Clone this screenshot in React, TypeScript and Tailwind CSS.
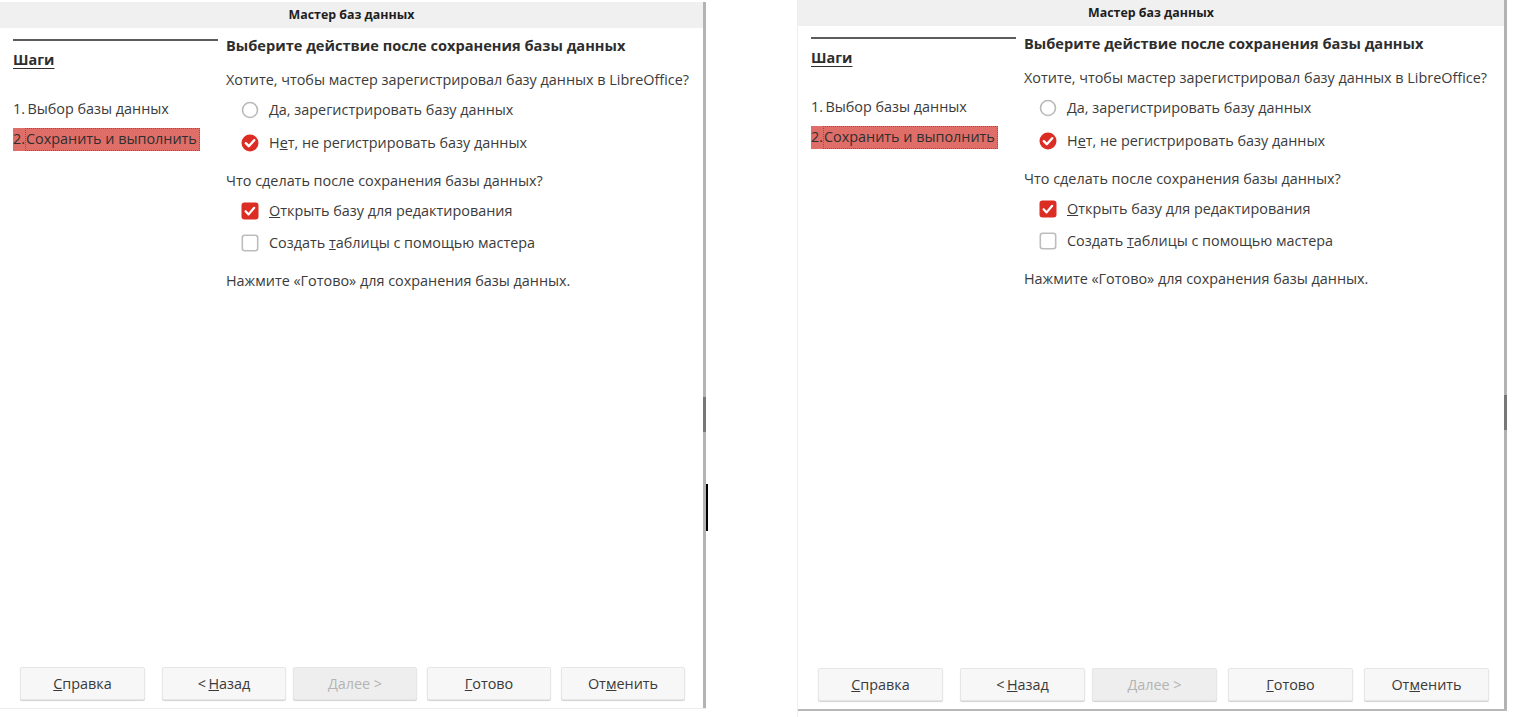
import React from "react";

const font = { fontFamily: '"Open Sans", "Noto Sans", sans-serif' };

function Radio({ checked }: { checked?: boolean }) {
  if (checked) {
    return (
      <svg width="18" height="18" viewBox="0 0 18 18">
        <circle cx="9" cy="9" r="8.5" fill="#dc2d24" />
        <path d="M4.8 9.2 L7.8 12.2 L13.2 6.2" fill="none" stroke="#fff" strokeWidth="2.4" strokeLinecap="round" strokeLinejoin="round" />
      </svg>
    );
  }
  return (
    <svg width="18" height="18" viewBox="0 0 18 18">
      <circle cx="9" cy="9" r="7.5" fill="#fff" stroke="#b9b9b9" strokeWidth="1.6" />
    </svg>
  );
}

function Check({ checked }: { checked?: boolean }) {
  if (checked) {
    return (
      <svg width="18" height="18" viewBox="0 0 18 18">
        <rect x="0.5" y="0.5" width="17" height="17" rx="3" fill="#dc2d24" />
        <path d="M4.6 9.2 L7.6 12.4 L13.2 5.8" fill="none" stroke="#fff" strokeWidth="2.2" strokeLinecap="round" strokeLinejoin="round" />
      </svg>
    );
  }
  return (
    <svg width="18" height="18" viewBox="0 0 18 18">
      <rect x="1.3" y="1.3" width="15.4" height="15.4" rx="2.5" fill="#fff" stroke="#bdbdbd" strokeWidth="1.6" />
    </svg>
  );
}

function Btn({ children, disabled, className }: { children: React.ReactNode; disabled?: boolean; className?: string }) {
  return (
    <div
      className={
        "h-[33px] flex items-center justify-center rounded-[2px] border border-[#e6e6e6] shadow-[0_1px_1px_rgba(0,0,0,0.18)] text-[14.4px] " +
        (disabled ? "bg-[#eeeeee] text-[#b4b4b4] " : "bg-[#f7f7f7] text-[#3a3a3a] ") +
        (className ?? "")
      }
    >
      {children}
    </div>
  );
}

function Dialog({ className, wide }: { className?: string; wide?: boolean }) {
  const w = wide ? "w-[125px]" : "w-[124px]";
  return (
    <div className={"flex flex-col bg-white text-[#3b3b3b] " + (className ?? "")} style={font}>
      <div className="h-[26px] bg-[#f0f0f0] flex items-center justify-center text-[12.4px] font-bold text-[#1e1e1e]">
        Мастер баз данных
      </div>
      <div className="flex-1 flex">
        <div className="w-[205px] ml-[13px] flex flex-col text-[14.4px]">
          <div className="mt-[11px] h-[1.5px] bg-[#5c5c5c]" />
          <div className="mt-[9px] h-[20px] flex items-center font-bold text-[#2e2e2e]">
            <span className="underline underline-offset-[3px]">Шаги</span>
          </div>
          <div className="mt-[29px] h-[20px] flex items-center">1.&thinsp;Выбор базы данных</div>
          <div className="mt-[9px] h-[23px] w-[187px] flex items-center bg-[#df6e68] text-[#2f2f2f] whitespace-nowrap">
            <span>2.</span>
            <span className="h-full flex-1 flex items-center border border-dotted border-[#1f7f86]">Сохранить и выполнить</span>
          </div>
        </div>
        <div className="ml-[8px] flex flex-col text-[14.4px] whitespace-nowrap">
          <div className="mt-[8px] h-[20px] flex items-center font-bold text-[14.6px] text-[#2e2e2e]">
            Выберите действие после сохранения базы данных
          </div>
          <div className="mt-[14px] h-[20px] flex items-center">
            Хотите, чтобы мастер зарегистрировал базу данных в LibreOffice?
          </div>
          <div className="mt-[10px] h-[20px] flex items-center pl-[15px] gap-[10px]">
            <Radio />
            <span>
              <span className="underline">Д</span>а, зарегистрировать базу данных
            </span>
          </div>
          <div className="mt-[13px] h-[20px] flex items-center pl-[15px] gap-[10px]">
            <Radio checked />
            <span>
              Н<span className="underline">е</span>т, не регистрировать базу данных
            </span>
          </div>
          <div className="mt-[18px] h-[20px] flex items-center">Что сделать после сохранения базы данных?</div>
          <div className="mt-[10px] h-[20px] flex items-center pl-[15px] gap-[10px]">
            <Check checked />
            <span>
              <span className="underline">О</span>ткрыть базу для редактирования
            </span>
          </div>
          <div className="mt-[12px] h-[20px] flex items-center pl-[15px] gap-[10px]">
            <Check />
            <span>
              Создать <span className="underline">т</span>аблицы с помощью мастера
            </span>
          </div>
          <div className="mt-[18px] h-[20px] flex items-center">Нажмите «Готово» для сохранения базы данных.</div>
        </div>
      </div>
      <div className="flex items-center mb-[8px] pl-[20px]">
        <Btn className="w-[125px]">
          <span className="underline">С</span>правка
        </Btn>
        <Btn className={w + " ml-[17px]"}>
          &lt;&thinsp;<span className="underline">Н</span>азад
        </Btn>
        <Btn disabled className={w + " ml-[7px]"}>
          <span className="underline">Д</span>алее &gt;
        </Btn>
        <Btn className={w + (wide ? " ml-[11px]" : " ml-[10px]")}>
          <span className="underline">Г</span>отово
        </Btn>
        <Btn className={w + (wide ? " ml-[11px]" : " ml-[10px]")}>
          От<span className="underline">м</span>енить
        </Btn>
      </div>
    </div>
  );
}

function EdgeBar() {
  return (
    <div className="w-[3px] bg-[#b3b3b3] flex flex-col">
      <div className="h-[395px]" />
      <div className="h-[35px] bg-[#77777a]" />
    </div>
  );
}

export default function App() {
  return (
    <div className="w-[1513px] h-[717px] bg-white flex overflow-hidden">
      <div className="flex h-[707px] mt-[2px] border-b border-[#ededed]">
        <Dialog className="w-[703px]" />
        <EdgeBar />
      </div>
      <div className="w-[92px] flex">
        <div className="w-[2px] h-[47px] mt-[484px] bg-black" />
        <div className="flex-1" />
        <div className="w-[1px] h-full bg-[#eeeeee]" />
      </div>
      <div className="flex h-[711px] border-b-2 border-[#b8b8b8]">
        <Dialog className="w-[706px]" wide />
        <EdgeBar />
      </div>
    </div>
  );
}
